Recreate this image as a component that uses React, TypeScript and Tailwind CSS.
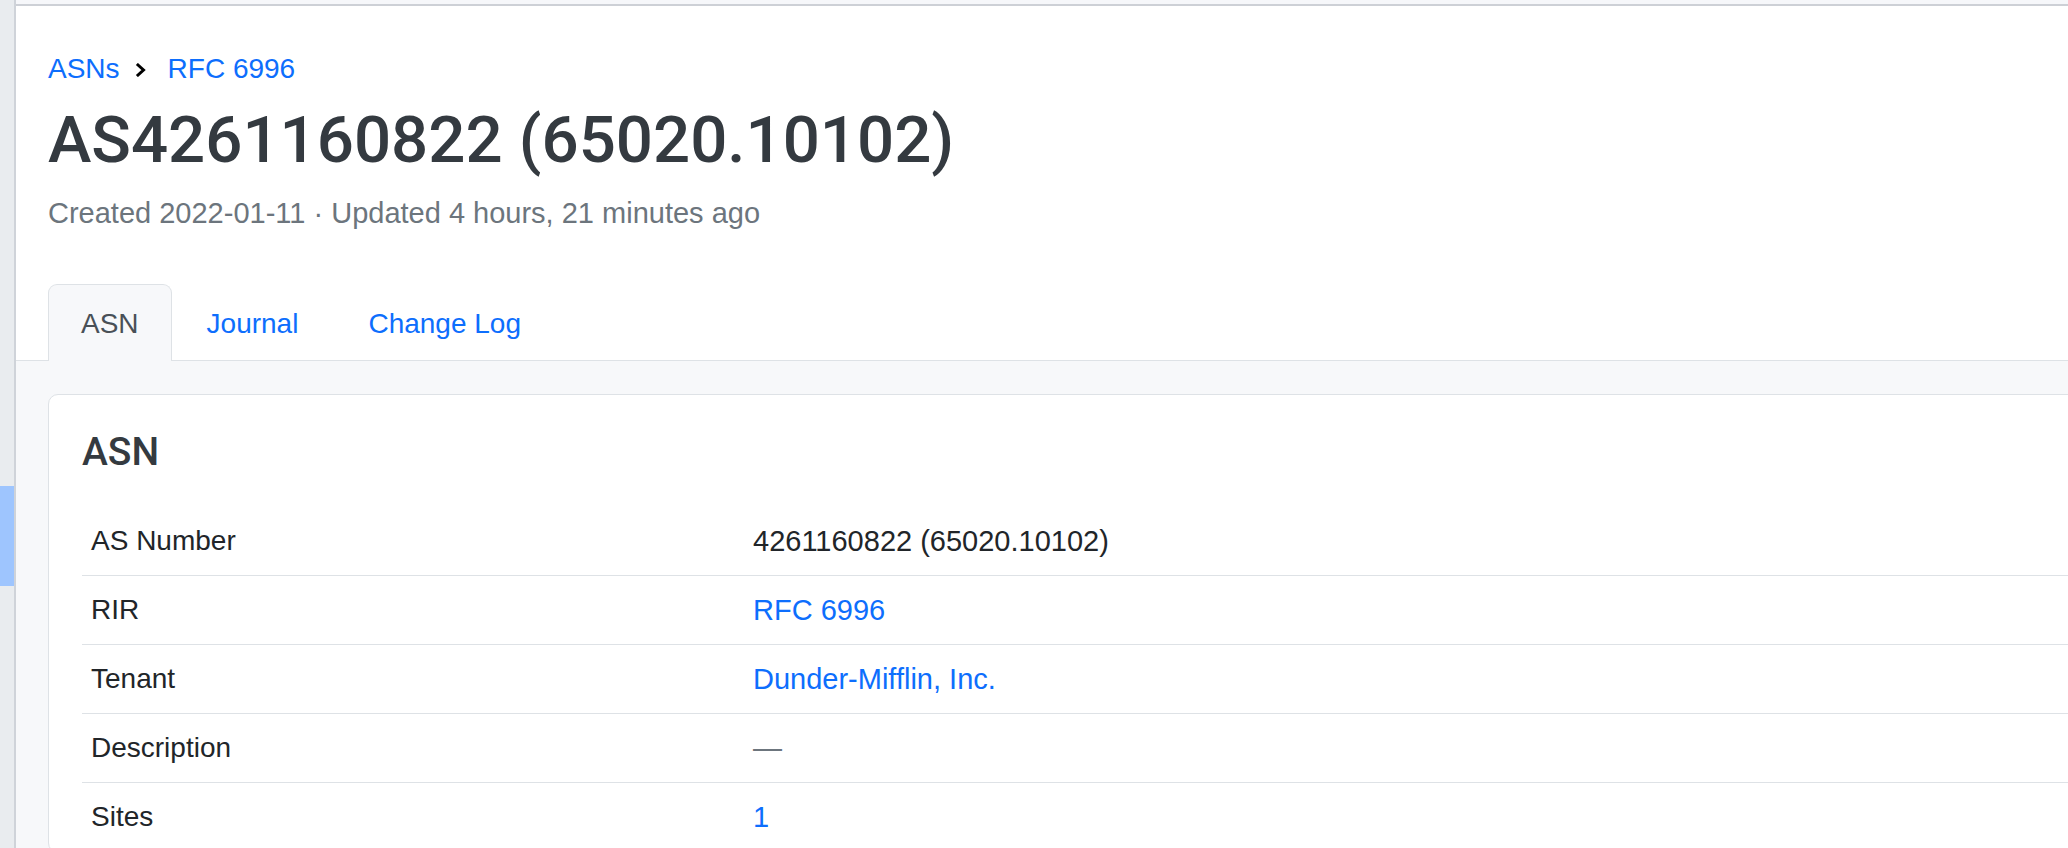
import React from "react";

const rows: { label: string; value: string; kind: "text" | "link" | "muted" }[] = [
  { label: "AS Number", value: "4261160822 (65020.10102)", kind: "text" },
  { label: "RIR", value: "RFC 6996", kind: "link" },
  { label: "Tenant", value: "Dunder-Mifflin, Inc.", kind: "link" },
  { label: "Description", value: "—", kind: "muted" },
  { label: "Sites", value: "1", kind: "link" },
];

export default function App() {
  return (
    <div className="flex h-[848px] w-full overflow-hidden bg-white font-['Liberation_Sans',Arial,sans-serif] text-[28px] text-[#212529]">
      {/* collapsed sidebar */}
      <div className="flex w-[16px] shrink-0 flex-col border-r-2 border-[#cfd3d9] bg-[#e9ecef]">
        <div className="h-[486px]" />
        <div className="h-[100px] bg-[#9ec5fe]" />
      </div>

      <div className="flex min-w-0 flex-1 flex-col">
        <div className="h-[6px] shrink-0 border-b-2 border-[#cdd0d6] bg-[#f6f7fa]" />

        <div className="px-[32px] pt-[42px]">
          <div className="flex items-center leading-[42px]">
            <a className="text-[#0d6efd]">ASNs</a>
            <svg className="ml-[15px] mr-[21px] mt-[2px]" width="12" height="14" viewBox="0 0 12 14" fill="none">
              <path d="M3 2l5.5 5L3 12" stroke="#000" strokeWidth="3" strokeLinecap="square" />
            </svg>
            <a className="text-[#0d6efd]">RFC 6996</a>
          </div>
          <h1 className="mt-[10px] font-['Roboto',Arial,sans-serif] text-[65.4px] font-medium leading-[80px] text-[#343a40]">
            AS4261160822 (65020.10102)
          </h1>
          <div className="mt-[12px] text-[29px] leading-[42px] text-[#6c757d]">
            Created 2022-01-11 · Updated 4 hours, 21 minutes ago
          </div>
        </div>

        <div className="mt-[50px] flex border-b border-[#dee2e6] px-[32px]">
          <div className="-mb-px rounded-t-[9px] border border-b-0 border-[#dee2e6] bg-[#f7f8fa] px-[32px] pb-[15px] pt-[18px] leading-[42px] text-[#495057]">
            ASN
          </div>
          <div className="px-[35px] pb-[15px] pt-[19px] leading-[42px] text-[#0d6efd]">Journal</div>
          <div className="px-[35px] pb-[15px] pt-[19px] leading-[42px] text-[#0d6efd]">Change Log</div>
        </div>

        <div className="flex-1 bg-[#f7f8fa] px-[32px] pt-[33px]">
          <div className="-mr-[120px] rounded-[10px] border border-[#dee2e6] bg-white px-[33px] pt-[34px]">
            <h2 className="font-['Roboto',Arial,sans-serif] text-[39px] font-medium leading-[46px] text-[#343a40]">ASN</h2>
            <table className="mt-[32px] w-full border-collapse">
              <tbody>
                {rows.map((r) => (
                  <tr key={r.label} className="border-b border-[#dee2e6]">
                    <td className="w-[662px] px-[9px] py-[13px] leading-[42px]">{r.label}</td>
                    <td
                      className={
                        "px-[9px] py-[13px] text-[29px] leading-[42px] " +
                        (r.kind === "link" ? "text-[#0d6efd]" : r.kind === "muted" ? "text-[#6c757d]" : "")
                      }
                    >
                      {r.value}
                    </td>
                  </tr>
                ))}
              </tbody>
            </table>
          </div>
        </div>
      </div>
    </div>
  );
}
